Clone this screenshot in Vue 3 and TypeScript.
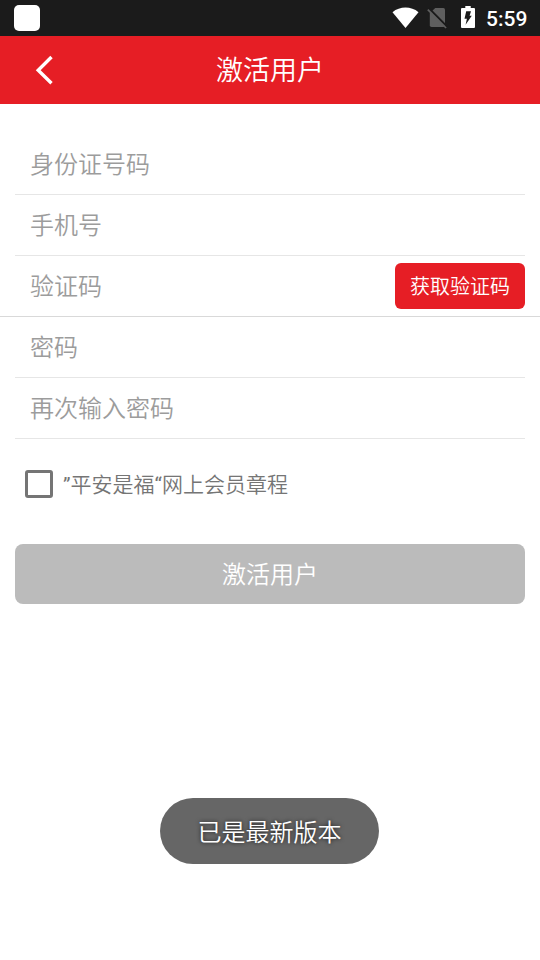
<script setup lang="ts">
import { reactive, ref } from 'vue'

interface Field {
  key: string
  label: string
  type: string
  hasCode?: boolean
}

const fields: Field[] = [
  { key: 'idNumber', label: '身份证号码', type: 'text' },
  { key: 'phone', label: '手机号', type: 'tel' },
  { key: 'code', label: '验证码', type: 'text', hasCode: true },
  { key: 'password', label: '密码', type: 'password' },
  { key: 'confirm', label: '再次输入密码', type: 'password' },
]

const form = reactive<Record<string, string>>({
  idNumber: '',
  phone: '',
  code: '',
  password: '',
  confirm: '',
})
const agreed = ref(false)
const toast = ref('已是最新版本')
</script>

<template>
  <div class="screen">
    <div class="status">
      <span class="app-dot"></span>
      <div class="status-right">
        <svg class="wifi" width="28" height="22" viewBox="0 0 28 22">
          <path d="M.5 5.200C4.200 2.200 8.800 .6 13.500 .6S22.800 2.200 26.500 5.200L13.500 21z" fill="#fff" />
        </svg>
        <svg class="sim" width="21" height="22" viewBox="0 0 21 22">
          <path d="M8.300 1H16.300Q18 1 18 2.700V18.300Q18 20 16.300 20H4.500Q2.800 20 2.800 18.300V6z" fill="#5f5f5f" />
          <path d="M1.800 1.400 20.100 19.700" stroke="#1b1b1b" stroke-width="2.200" fill="none" />
          <path d="M.8 2.700 19.100 21" stroke="#5f5f5f" stroke-width="1.700" fill="none" />
        </svg>
        <svg class="battery" width="14" height="22" viewBox="0 0 14 22">
          <path d="M4.300 0H9.700V2H13Q14 2 14 3V21Q14 22 13 22H1Q0 22 0 21V3Q0 2 1 2H4.300z" fill="#fff" />
          <path d="M5.200 5.300H10L8.600 9.700H10.800L4.600 18.800 5.900 12.700H3.500z" fill="#1b1b1b" />
        </svg>
        <span class="time">5:59</span>
      </div>
    </div>

    <header class="nav">
      <svg class="back" width="20" height="32" viewBox="0 0 20 32">
        <path d="M16.500 3 3.200 16.200 16.500 29.300" fill="none" stroke="#fff" stroke-width="3.400" />
      </svg>
      <h1>激活用户</h1>
    </header>

    <main class="content">
      <div v-for="f in fields" :key="f.key" class="row" :class="{ wide: f.hasCode }">
        <input v-model="form[f.key]" :type="f.type" :placeholder="f.label" />
        <button v-if="f.hasCode" class="code-btn" type="button">获取验证码</button>
      </div>

      <label class="agree">
        <input v-model="agreed" class="check" type="checkbox" />
        <span><i>”</i>平安是福<i>“</i>网上会员章程</span>
      </label>

      <button class="submit" type="button">激活用户</button>
    </main>

    <div class="toast">{{ toast }}</div>
  </div>
</template>

<style>
body {
  margin: 0;
  background: #fff;
}
</style>

<style scoped>
.screen {
  width: 540px;
  height: 960px;
  display: flex;
  flex-direction: column;
  position: relative;
  overflow: hidden;
  background: #fff;
  font-family: Roboto, 'Noto Sans CJK SC', sans-serif;
  font-weight: 350;
}
.status {
  height: 36px;
  flex: none;
  box-sizing: border-box;
  padding: 0 13px 0 14px;
  display: flex;
  align-items: center;
  justify-content: space-between;
  background: #1b1b1b;
}
.app-dot {
  width: 26px;
  height: 26px;
  border-radius: 5px;
  background: #fff;
}
.status-right {
  display: flex;
  align-items: center;
}
.wifi {
  margin-right: 7px;
  margin-top: -1px;
}
.sim {
  margin-right: 13px;
}
.battery {
  margin-right: 11px;
  margin-top: -2px;
}
.time {
  width: 41px;
  color: #fff;
  font-size: 21px;
  line-height: 36px;
  font-weight: 500;
  white-space: nowrap;
  padding-top: 2px;
}
.nav {
  height: 68px;
  flex: none;
  display: grid;
  grid-template-columns: 90px 1fr 90px;
  align-items: center;
  background: #e61e25;
}
.back {
  margin-left: 35px;
}
h1 {
  margin: 0;
  color: #fff;
  font-size: 27px;
  line-height: 66px;
  padding-top: 2px;
  font-weight: 350;
  text-align: center;
}
.content {
  display: flex;
  flex-direction: column;
  padding: 30px 15px 0;
}
.row {
  height: 60px;
  display: flex;
  align-items: center;
  border-bottom: 1px solid #e6e6e6;
}
.row.wide {
  margin: 0 -15px;
  padding: 0 15px;
  border-bottom-color: #d9d9d9;
}
.row input {
  flex: 1;
  min-width: 0;
  height: 60px;
  box-sizing: border-box;
  padding: 2px 15px 0;
  border: 0;
  outline: 0;
  background: transparent;
  color: #333;
  font: inherit;
  font-size: 24px;
}
.row input::placeholder {
  color: #9c9c9c;
  opacity: 1;
}
.code-btn {
  width: 130px;
  height: 46px;
  padding: 0 0 1px;
  border: 0;
  border-radius: 6px;
  background: #e61e25;
  color: #fff;
  font: inherit;
  font-size: 20px;
}
.agree {
  display: flex;
  align-items: center;
  height: 30px;
  margin: 30px 0 0 10px;
  color: #757575;
  font-size: 21px;
  line-height: 30px;
}
.agree span {
  padding-top: 2px;
}
.agree i {
  font-style: normal;
  font-weight: 400;
}
.check {
  appearance: none;
  width: 28px;
  height: 28px;
  box-sizing: border-box;
  margin: 0 10px 0 0;
  border: 3px solid #757575;
  border-radius: 3px;
}
.submit {
  height: 60px;
  margin-top: 45px;
  padding: 0 0 3px;
  border: 0;
  border-radius: 8px;
  background: #bbb;
  color: #fff;
  font: inherit;
  font-size: 24px;
}
.toast {
  position: absolute;
  left: 160px;
  top: 798px;
  width: 219px;
  height: 66px;
  border-radius: 33px;
  background: #666;
  color: #fff;
  font-size: 24px;
  line-height: 70px;
  text-align: center;
  text-shadow: 0 0 4px rgba(0, 0, 0, 0.75);
}
</style>
